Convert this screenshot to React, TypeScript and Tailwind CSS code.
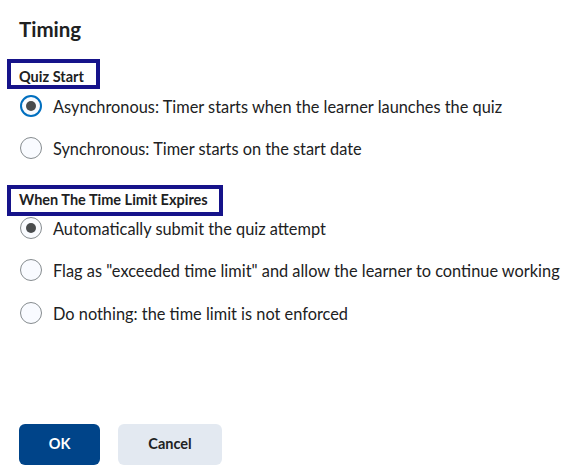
import type { ReactNode } from "react";

type Option = { label: string; checked?: boolean; focused?: boolean };

const QUIZ_START: Option[] = [
  { label: "Asynchronous: Timer starts when the learner launches the quiz", checked: true, focused: true },
  { label: "Synchronous: Timer starts on the start date" },
];

const EXPIRY: Option[] = [
  { label: "Automatically submit the quiz attempt", checked: true },
  { label: 'Flag as "exceeded time limit" and allow the learner to continue working' },
  { label: "Do nothing: the time limit is not enforced" },
];

function Radio({ checked, focused }: { checked?: boolean; focused?: boolean }) {
  return (
    <span
      className={`grid h-[22px] w-[22px] shrink-0 place-items-center rounded-full bg-[#f9fbff] ${
        focused ? "border-[2.5px] border-[#006fbf]" : "border border-[#868c8f]"
      }`}
    >
      {checked && <span className="h-[10px] w-[10px] rounded-full bg-[#494c4e]" />}
    </span>
  );
}

function RadioGroup({ options, className }: { options: Option[]; className: string }) {
  return (
    <div className={`flex flex-col gap-[20.5px] pl-[20px] ${className}`}>
      {options.map((o) => (
        <label key={o.label} className="flex h-[22px] items-start gap-[11px]">
          <Radio checked={o.checked} focused={o.focused} />
          <span className="mt-[1px] whitespace-nowrap text-[16.35px] leading-[22px]">{o.label}</span>
        </label>
      ))}
    </div>
  );
}

function GroupLabel({ children, className }: { children: ReactNode; className: string }) {
  return (
    <div
      className={`ml-[7px] border-4 border-[#16138a] pl-[8px] text-[14.5px] font-bold leading-[16px] text-[#202122] ${className}`}
    >
      {children}
    </div>
  );
}

export default function App() {
  return (
    <div className="h-[474px] w-[572px] overflow-hidden bg-white font-['Lato',sans-serif] text-[#202122]">
      <h1 className="pl-[19px] pt-[17px] text-[20.5px] font-bold leading-[24px]">Timing</h1>

      <GroupLabel className="mt-[18px] w-[93px] pt-[6px]">Quiz Start</GroupLabel>
      <RadioGroup options={QUIZ_START} className="mt-[5.5px]" />

      <GroupLabel className="mt-[26px] w-[216px] pb-[4px] pt-[3px]">When The Time Limit Expires</GroupLabel>
      <RadioGroup options={EXPIRY} className="mt-[0.5px]" />

      <div className="ml-[19px] mt-[100px] flex gap-[18px]">
        <button
          type="button"
          className="h-[41px] w-[81px] rounded-[6px] bg-[#004489] text-[14.5px] font-bold text-white"
        >
          OK
        </button>
        <button
          type="button"
          className="h-[41px] w-[104px] rounded-[6px] bg-[#e3e9f1] text-[14.5px] font-bold text-[#202122]"
        >
          Cancel
        </button>
      </div>
    </div>
  );
}
